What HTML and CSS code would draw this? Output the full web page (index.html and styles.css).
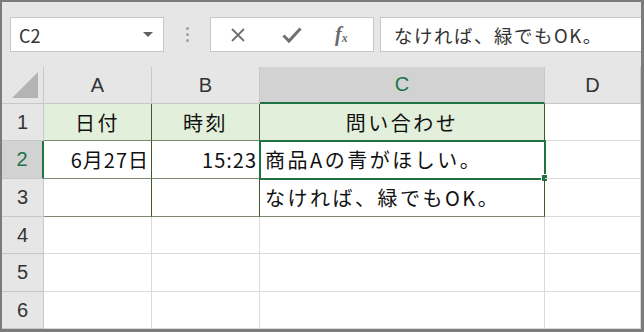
FILE: index.html
```html
<!DOCTYPE html>
<html lang="ja">
<head>
    <meta charset="UTF-8">
    <meta name="viewport" content="width=device-width, initial-scale=1.0">
    <title>Sheet</title>
    <link rel="stylesheet" href="styles.css">
</head>
<body>
    <div class="window">
        <div class="formula-bar">
            <div class="name-box">
                <span>C2</span>
                <span class="drop"></span>
            </div>
            <div class="dots"><i></i><i></i><i></i></div>
            <div class="fx-box">
                <svg class="icon" width="18" height="18" viewBox="0 0 18 18">
                    <path d="M3 3 L15 15 M15 3 L3 15" stroke="#707070" stroke-width="1.8" fill="none"/>
                </svg>
                <svg class="icon" width="22" height="18" viewBox="0 0 22 18">
                    <path d="M2.5 9.5 L8 15 L19.5 2.5" stroke="#707070" stroke-width="3" fill="none"/>
                </svg>
                <span class="fx">f<sub>x</sub></span>
            </div>
            <div class="formula">なければ、緑でもOK。</div>
        </div>

        <div class="sheet">
            <div class="corner"><span class="tri"></span></div>
            <div class="col-head">A</div>
            <div class="col-head">B</div>
            <div class="col-head active">C</div>
            <div class="col-head">D</div>

            <div class="row-head">1</div>
            <div class="cell tbl title">日付</div>
            <div class="cell tbl title">時刻</div>
            <div class="cell tbl title">問い合わせ</div>
            <div class="cell"></div>

            <div class="row-head active">2</div>
            <div class="cell tbl num">6月27日</div>
            <div class="cell tbl num">15:23</div>
            <div class="cell tbl text selected">商品Aの青がほしい。<span class="handle"></span></div>
            <div class="cell"></div>

            <div class="row-head">3</div>
            <div class="cell tbl"></div>
            <div class="cell tbl"></div>
            <div class="cell tbl text">なければ、緑でもOK。</div>
            <div class="cell"></div>

            <div class="row-head">4</div>
            <div class="cell"></div>
            <div class="cell"></div>
            <div class="cell"></div>
            <div class="cell"></div>

            <div class="row-head">5</div>
            <div class="cell"></div>
            <div class="cell"></div>
            <div class="cell"></div>
            <div class="cell"></div>

            <div class="row-head">6</div>
            <div class="cell"></div>
            <div class="cell"></div>
            <div class="cell"></div>
            <div class="cell"></div>
        </div>
    </div>
</body>
</html>
```

FILE: styles.css
```css
body {
    margin: 0;
    font-family: "Noto Sans CJK JP", "Noto Sans", sans-serif;
}
.window {
    width: 639px;
    height: 327px;
    border-style: solid;
    border-color: #7b7b7b;
    border-width: 2px 3px 3px 2px;
    background: #e6e6e6;
    overflow: hidden;
}

/* formula bar */
.formula-bar {
    height: 65px;
    display: flex;
    align-items: center;
    padding-left: 8px;
    box-sizing: border-box;
}
.name-box {
    width: 134px;
    height: 33px;
    border: 1px solid #c6c6c6;
    background: #fff;
    display: flex;
    align-items: center;
    justify-content: space-between;
    padding: 0 10px 0 8px;
    font-size: 18px;
    color: #333;
}
.drop {
    width: 0;
    height: 0;
    border-left: 5px solid transparent;
    border-right: 5px solid transparent;
    border-top: 5px solid #606060;
}
.dots {
    width: 46px;
    display: flex;
    flex-direction: column;
    align-items: center;
    gap: 3px;
}
.dots i {
    width: 3px;
    height: 3px;
    border-radius: 50%;
    background: #a0a0a0;
}
.fx-box {
    width: 164px;
    height: 35px;
    border: 1px solid #c6c6c6;
    background: #fff;
    display: flex;
    align-items: center;
    gap: 34px;
    padding-left: 18px;
    box-sizing: border-box;
}
.fx {
    font-family: "Liberation Serif", serif;
    font-style: italic;
    font-weight: bold;
    font-size: 20px;
    color: #6a6a6a;
    margin-left: -2px;
}
.fx sub {
    font-size: 12px;
    vertical-align: -1px;
}
.formula {
    flex: 1;
    height: 35px;
    margin-left: 6px;
    border: 1px solid #c6c6c6;
    border-right: none;
    background: #fff;
    box-sizing: border-box;
    padding-left: 13px;
    display: flex;
    align-items: center;
    font-size: 18.5px;
    letter-spacing: 1.5px;
    color: #333;
}

/* sheet grid */
.sheet {
    display: grid;
    grid-template-columns: 42px 108px 108px 285px 96px;
    grid-template-rows: 37px 37px 38px 38px 37px 38px 37px;
    background: #fff;
}
.corner {
    background: #e6e6e6;
    border-right: 1px solid #c8c8c8;
    border-bottom: 1px solid #c8c8c8;
    position: relative;
}
.tri {
    position: absolute;
    right: 5px;
    bottom: 5px;
    width: 0;
    height: 0;
    border-left: 26px solid transparent;
    border-bottom: 26px solid #b4b4b4;
}
.col-head,
.row-head {
    background: #e6e6e6;
    border-right: 1px solid #c8c8c8;
    border-bottom: 1px solid #c8c8c8;
    display: flex;
    align-items: center;
    justify-content: center;
    font-family: "Liberation Sans", sans-serif;
    font-size: 20px;
    color: #333;
}
.col-head.active {
    background: #d2d2d2;
    color: #217346;
    border-bottom: 2px solid #217346;
}
.row-head.active {
    background: #d2d2d2;
    color: #217346;
    border-right: 2px solid #217346;
}
.cell {
    border-right: 1px solid #dadada;
    border-bottom: 1px solid #dadada;
    display: flex;
    align-items: center;
    font-size: 20px;
    letter-spacing: 2.5px;
    color: #111;
    padding: 0 4px;
    white-space: nowrap;
    position: relative;
}
.cell.tbl {
    border-right-color: #3c5a2c;
    border-bottom-color: #7a8870;
}
.title {
    background: #e2efda;
    justify-content: center;
}
.num {
    justify-content: flex-end;
    letter-spacing: 1px;
    padding-right: 2px;
}
.text {
    padding-left: 5px;
}
.selected {
    outline: 2px solid #217346;
    outline-offset: -1px;
}
.handle {
    position: absolute;
    right: -4px;
    bottom: -4px;
    width: 5px;
    height: 6px;
    background: #217346;
    border: 1px solid #fff;
}
```
